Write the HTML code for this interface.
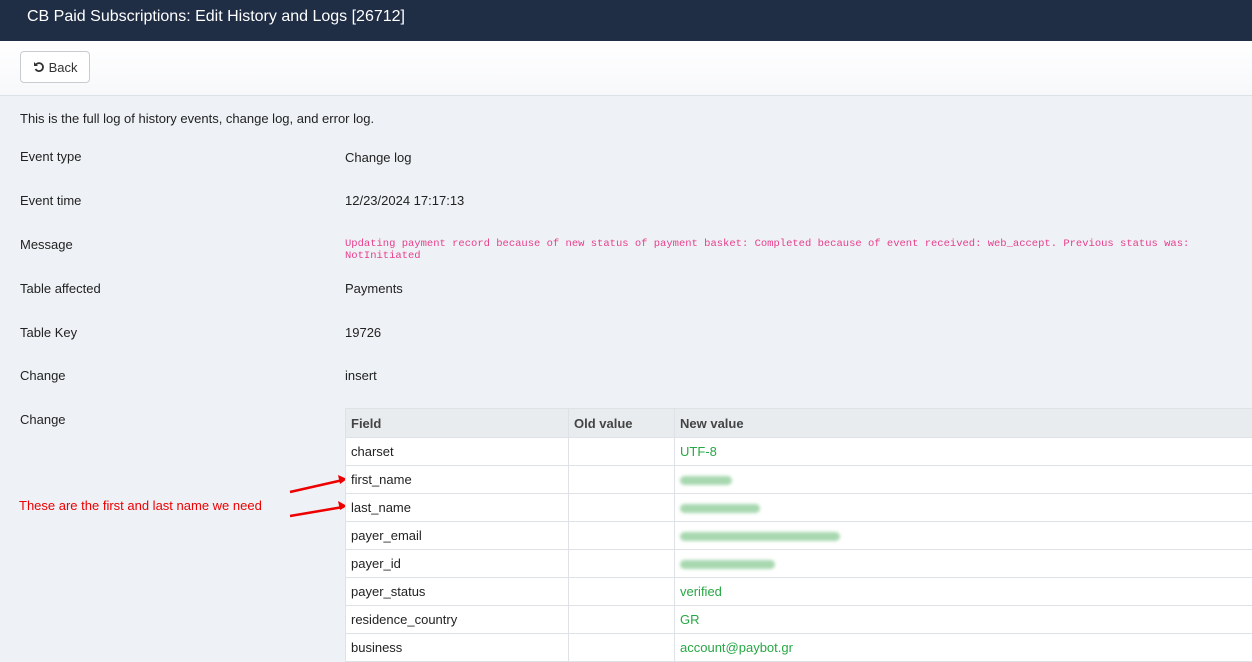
<!DOCTYPE html>
<html><head><meta charset="utf-8"><style>
body{margin:0;width:1252px;height:646px;overflow:hidden;background:#eef2f6;font-family:"Liberation Sans",sans-serif;font-size:13px;color:#222}
.hd{height:41px;background:#1f2d45;color:#fff;font-size:16px;line-height:33px;padding-left:27px}
.tb{height:54px;background:linear-gradient(#fff,#f7f8fa);border-bottom:1px solid #dde2e8;position:relative}
.btn{position:absolute;left:20px;top:10px;width:70px;height:32px;border:1px solid #c8ccd2;border-radius:4px;background:#fff;font-size:13px;line-height:32px;box-sizing:border-box;padding-left:12px;color:#333}
.t{position:absolute;font-size:13px}
.msg{font-family:"Liberation Mono",monospace;color:#e83e8c;font-size:10.5px}
table{position:absolute;left:345px;top:408px;border-collapse:collapse;width:910px;background:#fff}
td,th{border:1px solid #dee2e6;height:27px;padding:0 0 0 5px;text-align:left;font-size:13px}
th{background:#e9ecef;font-weight:bold;color:#444;height:28px}
.g{color:#28a745}
.blur{display:inline-block;height:9px;background:#a8d8b0;border-radius:5px;filter:blur(1.5px);vertical-align:middle}
</style></head><body>
<div class="hd">CB Paid Subscriptions: Edit History and Logs [26712]</div>
<div class="tb"><div class="btn"><svg width="12" height="12" viewBox="0 0 12 12" style="vertical-align:-1px"><path d="M3 3.5A4 4 0 1 1 2.5 8" fill="none" stroke="#333" stroke-width="1.8"/><path d="M1 1v4h4z" fill="#333"/></svg> Back</div></div>
<div class="t" style="left:20px;top:111px">This is the full log of history events, change log, and error log.</div>
<div class="t" style="left:20px;top:149px">Event type</div><div class="t" style="left:345px;top:150px">Change log</div>
<div class="t" style="left:20px;top:193px">Event time</div><div class="t" style="left:345px;top:193px">12/23/2024 17:17:13</div>
<div class="t" style="left:20px;top:237px">Message</div><div class="t msg" style="left:345px;top:238px">Updating payment record because of new status of payment basket: Completed because of event received: web_accept. Previous status was: NotInitiated</div>
<div class="t" style="left:20px;top:281px">Table affected</div><div class="t" style="left:345px;top:281px">Payments</div>
<div class="t" style="left:20px;top:325px">Table Key</div><div class="t" style="left:345px;top:325px">19726</div>
<div class="t" style="left:20px;top:368px">Change</div><div class="t" style="left:345px;top:368px">insert</div>
<div class="t" style="left:20px;top:412px">Change</div>
<div class="t" style="left:19px;top:498px;color:#e00;font-size:13px">These are the first and last name we need</div>
<svg style="position:absolute;left:285px;top:470px" width="65" height="50"><path d="M5 22L58 10M5 46L58 37" stroke="#e00" stroke-width="2.5"/><path d="M62 9l-9-4 2 9zM62 36l-9-5 2 9z" fill="#e00"/></svg>
<table>
<tr><th style="width:217px">Field</th><th style="width:100px">Old value</th><th>New value</th></tr>
<tr><td>charset</td><td></td><td class="g">UTF-8</td></tr>
<tr><td>first_name</td><td></td><td><span class="blur" style="width:52px"></span></td></tr>
<tr><td>last_name</td><td></td><td><span class="blur" style="width:80px"></span></td></tr>
<tr><td>payer_email</td><td></td><td><span class="blur" style="width:160px"></span></td></tr>
<tr><td>payer_id</td><td></td><td><span class="blur" style="width:95px"></span></td></tr>
<tr><td>payer_status</td><td></td><td class="g">verified</td></tr>
<tr><td>residence_country</td><td></td><td class="g">GR</td></tr>
<tr><td>business</td><td></td><td class="g">account@paybot.gr</td></tr>
</table>
</body></html>
